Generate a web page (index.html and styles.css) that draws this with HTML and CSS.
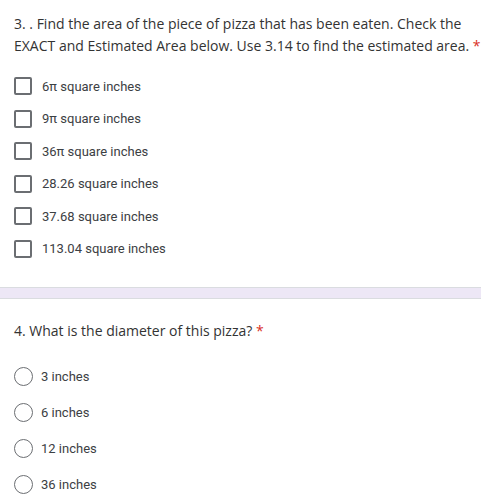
FILE: index.html
```html
<!DOCTYPE html>
<html>
<head>
<meta charset="utf-8">
<link rel="stylesheet" href="styles.css">
</head>
<body>
<section class="card">
  <div class="title">3. . Find the area of the piece of pizza that has been eaten. Check the EXACT and Estimated Area below. Use 3.14 to find the estimated area. <span class="req">*</span></div>
  <div class="opts checks">
    <div class="opt"><span class="box"></span><span>6π square inches</span></div>
    <div class="opt"><span class="box"></span><span>9π square inches</span></div>
    <div class="opt"><span class="box"></span><span>36π square inches</span></div>
    <div class="opt"><span class="box"></span><span>28.26 square inches</span></div>
    <div class="opt"><span class="box"></span><span>37.68 square inches</span></div>
    <div class="opt"><span class="box"></span><span>113.04 square inches</span></div>
  </div>
</section>
<div class="sep"></div>
<section class="card card2">
  <div class="title">4. What is the diameter of this pizza? <span class="req">*</span></div>
  <div class="opts radios">
    <div class="opt"><span class="radio"></span><span>3 inches</span></div>
    <div class="opt"><span class="radio"></span><span>6 inches</span></div>
    <div class="opt"><span class="radio"></span><span>12 inches</span></div>
    <div class="opt"><span class="radio"></span><span>36 inches</span></div>
  </div>
</section>
</body>
</html>
```
FILE: styles.css
```css
html, body { margin: 0; padding: 0; background: #fff; }
body { width: 481px; height: 498px; overflow: hidden; color: #333; }
.card { padding: 13px 0 0 14px; }
.title {
  font-family: "Open Sans", sans-serif;
  font-size: 14px;
  line-height: 22px;
  color: #333;
}
.req { color: #d93025; }
.opts { font-family: Roboto, sans-serif; font-size: 13px; color: #3c4043; }
.checks { margin-top: 20px; display: flex; flex-direction: column; gap: 14.5px; }
.opt { display: flex; align-items: center; gap: 10px; height: 18px; }
.box {
  width: 14px; height: 14px;
  border: 2px solid #6b6e72;
  border-radius: 2px;
  flex: none;
}
.sep {
  margin-top: 29px;
  height: 10px;
  background: #ede7f6;
  border-top: 1px solid #dadce0;
  border-bottom: 1px solid #dadce0;
}
.card2 { padding-top: 21px; }
.radios { margin-top: 25px; display: flex; flex-direction: column; gap: 16px; }
.radios .opt { height: 20px; gap: 8px; }
.radio {
  width: 17px; height: 17px;
  border: 1.5px solid #6b6e72;
  border-radius: 50%;
  flex: none;
}
```
